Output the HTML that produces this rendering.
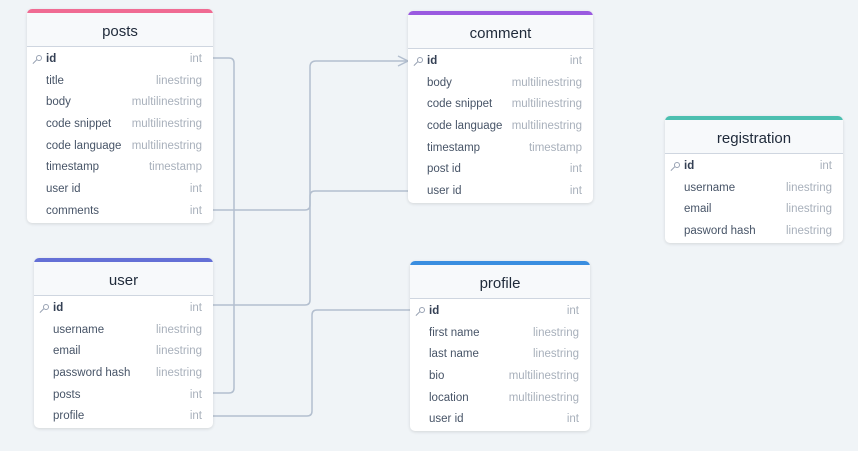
<!DOCTYPE html>
<html><head><style>
body{margin:0;width:858px;height:451px;background:#f0f4f7;font-family:"Liberation Sans",sans-serif;position:relative;overflow:hidden}
.t{position:absolute;background:#fff;border-radius:5px;box-shadow:0 1px 3px rgba(0,0,0,.12);overflow:hidden}
.h{height:33px;border-top:4px solid #ccc;background:#f7f9fb;border-bottom:1px solid #cfd6e0;text-align:center;line-height:37px;font-size:15px;color:#1f2a3a}
.r{height:21.7px;line-height:21.7px;font-size:11.5px;color:#475467;padding:0 11px 0 19px;display:flex;justify-content:space-between}
.r span:last-child{color:#a8b0bb}
.r.k{font-weight:bold;color:#344054;position:relative}
.r.k span:last-child{font-weight:normal}
.r.k:before{content:"";position:absolute;left:9px;top:6px;width:4px;height:4px;border:1px solid #98a2b3;border-radius:50%}
.r.k:after{content:"";position:absolute;left:5px;top:12px;width:6px;height:1px;background:#98a2b3;transform:rotate(-45deg)}
.b{padding-top:2px}
svg{position:absolute;left:0;top:0}
</style></head><body>
<svg width="858" height="451" fill="none" stroke="#b3bfcf" stroke-width="1.5">
<path d="M213 58H229Q234 58 234 63V388Q234 393 229 393H213"/>
<path d="M213 210H305Q310 210 310 205V196Q310 191 315 191H408"/>
<path d="M213 305H305Q310 305 310 300V67Q310 61 316 61H408M398 56L408 61L398 66"/>
<path d="M213 416H307Q312 416 312 411V315Q312 310 317 310H410"/>
</svg>
<div class="t" style="left:27px;top:9px;width:186px"><div class="h" style="border-top-color:#f06b93">posts</div><div class="b">
<div class="r k"><span>id</span><span>int</span></div><div class="r"><span>title</span><span>linestring</span></div><div class="r"><span>body</span><span>multilinestring</span></div><div class="r"><span>code snippet</span><span>multilinestring</span></div><div class="r"><span>code language</span><span>multilinestring</span></div><div class="r"><span>timestamp</span><span>timestamp</span></div><div class="r"><span>user id</span><span>int</span></div><div class="r"><span>comments</span><span>int</span></div></div></div>
<div class="t" style="left:408px;top:11px;width:185px"><div class="h" style="border-top-color:#9a5ae0">comment</div><div class="b">
<div class="r k"><span>id</span><span>int</span></div><div class="r"><span>body</span><span>multilinestring</span></div><div class="r"><span>code snippet</span><span>multilinestring</span></div><div class="r"><span>code language</span><span>multilinestring</span></div><div class="r"><span>timestamp</span><span>timestamp</span></div><div class="r"><span>post id</span><span>int</span></div><div class="r"><span>user id</span><span>int</span></div></div></div>
<div class="t" style="left:665px;top:116px;width:178px"><div class="h" style="border-top-color:#4cbfb0">registration</div><div class="b">
<div class="r k"><span>id</span><span>int</span></div><div class="r"><span>username</span><span>linestring</span></div><div class="r"><span>email</span><span>linestring</span></div><div class="r"><span>pasword hash</span><span>linestring</span></div></div></div>
<div class="t" style="left:34px;top:258px;width:179px"><div class="h" style="border-top-color:#6470d6">user</div><div class="b">
<div class="r k"><span>id</span><span>int</span></div><div class="r"><span>username</span><span>linestring</span></div><div class="r"><span>email</span><span>linestring</span></div><div class="r"><span>password hash</span><span>linestring</span></div><div class="r"><span>posts</span><span>int</span></div><div class="r"><span>profile</span><span>int</span></div></div></div>
<div class="t" style="left:410px;top:261px;width:180px"><div class="h" style="border-top-color:#3a8ee0">profile</div><div class="b">
<div class="r k"><span>id</span><span>int</span></div><div class="r"><span>first name</span><span>linestring</span></div><div class="r"><span>last name</span><span>linestring</span></div><div class="r"><span>bio</span><span>multilinestring</span></div><div class="r"><span>location</span><span>multilinestring</span></div><div class="r"><span>user id</span><span>int</span></div></div></div>
</body></html>
